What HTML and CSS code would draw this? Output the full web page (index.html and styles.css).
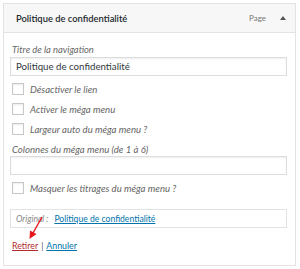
FILE: index.html
```html
<!DOCTYPE html>
<html lang="fr">
<head>
<meta charset="utf-8">
<link rel="stylesheet" href="styles.css">
</head>
<body>
<div class="item">
  <div class="head">
    <span class="title">Politique de confidentialité</span>
    <span class="type">Page</span>
    <span class="toggle"></span>
  </div>
  <div class="settings">
    <label class="lbl">Titre de la navigation</label>
    <div class="input">Politique de confidentialité</div>
    <div class="checks">
      <div class="check"><span class="cb"></span><span class="ctext">Désactiver le lien</span></div>
      <div class="check"><span class="cb"></span><span class="ctext">Activer le méga menu</span></div>
      <div class="check"><span class="cb"></span><span class="ctext">Largeur auto du méga menu ?</span></div>
    </div>
    <label class="lbl lbl2">Colonnes du méga menu (de 1 à 6)</label>
    <div class="input"></div>
    <div class="check check-last"><span class="cb"></span><span class="ctext">Masquer les titrages du méga menu ?</span></div>
    <div class="original">
      <span class="orig-label">Original :</span>
      <a class="link">Politique de confidentialité</a>
    </div>
    <div class="actions">
      <a class="remove">Retirer</a><span class="sep">|</span><a class="link">Annuler</a>
      <svg class="arrow" width="20" height="26" viewBox="0 0 20 26">
        <line x1="15" y1="1" x2="6" y2="17" stroke="#e8161c" stroke-width="1.4"/>
        <polygon points="2.5,23 3,14.5 9.5,18" fill="#e8161c"/>
      </svg>
    </div>
  </div>
</div>
</body>
</html>
```
FILE: styles.css
```css
* { box-sizing: border-box; }
body {
  margin: 0;
  padding: 3px;
  background: #fff;
  font-family: Lato, "Open Sans", "Liberation Sans", sans-serif;
}
.item {
  width: 293px;
  height: 263px;
  border: 1px solid #e3e3e3;
  background: #fff;
}
.head {
  height: 29px;
  background: #f7f7f7;
  border-bottom: 1px solid #e3e3e3;
  display: flex;
  align-items: center;
  padding: 0 9px 0 12px;
}
.title {
  font-size: 9.4px;
  font-weight: 600;
  color: #23282d;
  flex: 1;
}
.type {
  font-size: 8px;
  color: #777;
  margin-right: 14px;
}
.toggle {
  width: 0;
  height: 0;
  border-left: 3px solid transparent;
  border-right: 3px solid transparent;
  border-bottom: 4px solid #555;
  margin-bottom: 1px;
}
.settings {
  padding: 10px 8px 0 6px;
  position: relative;
}
.lbl {
  display: block;
  font-size: 9.4px;
  font-style: italic;
  color: #666;
  line-height: 14px;
  margin-left: 2px;
}
.input {
  height: 19px;
  border: 1px solid #ddd;
  box-shadow: inset 0 1px 2px rgba(0,0,0,.07);
  font-size: 9.7px;
  color: #32373c;
  line-height: 17px;
  padding-left: 5px;
}
.checks {
  margin-top: 3px;
}
.check {
  display: flex;
  align-items: center;
  height: 20px;
  margin-left: 2px;
}
.cb {
  width: 12px;
  height: 12px;
  border: 1px solid #c8c8c8;
  background: #fff;
  box-shadow: inset 0 1px 2px rgba(0,0,0,.08);
  margin-right: 6px;
}
.ctext {
  font-size: 9.6px;
  font-style: italic;
  color: #666;
}
.lbl2 {
  margin-top: 5px;
  line-height: 12px;
  font-size: 9.6px;
}
.check-last {
  margin-top: 3px;
}
.original {
  margin-top: 11px;
  height: 19px;
  border: 1px solid #e3e3e3;
  display: flex;
  align-items: center;
  padding-left: 5px;
  font-size: 8.6px;
}
.orig-label {
  font-style: italic;
  color: #888;
  margin-right: 6px;
}
.link {
  color: #0073aa;
  text-decoration: underline;
}
.actions {
  margin-top: 11px;
  margin-left: 2px;
  font-size: 8.8px;
  line-height: 14px;
  position: relative;
}
.remove {
  color: #b32d2e;
  text-decoration: underline;
}
.sep {
  color: #555;
  margin: 0 3px;
}
.arrow {
  position: absolute;
  left: 15px;
  top: -23px;
}
```
